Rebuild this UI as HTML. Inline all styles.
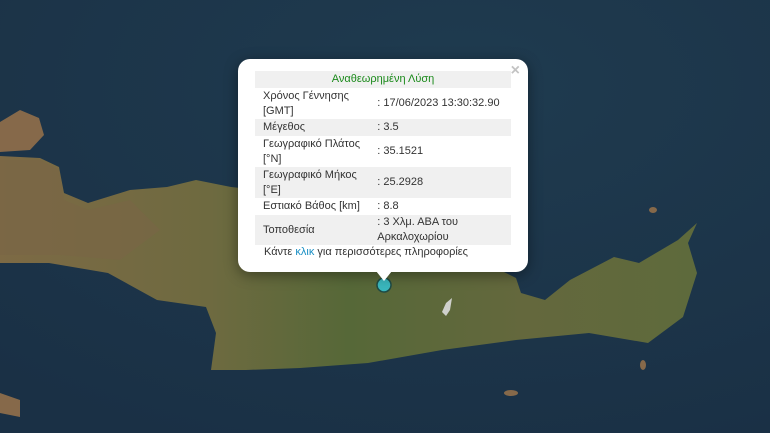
<!DOCTYPE html>
<html><head><meta charset="utf-8"><style>
body{margin:0;width:770px;height:433px;overflow:hidden;background:#1d3549;font-family:"Liberation Sans",sans-serif;}
#map{position:absolute;left:0;top:0}
.pop{position:absolute;left:238px;top:59px;width:290px;height:213px;background:#fff;border-radius:12px;box-shadow:0 3px 14px rgba(0,0,0,.4);}
.tip{position:absolute;left:376px;top:271px;width:0;height:0;border-left:8px solid transparent;border-right:8px solid transparent;border-top:10px solid #fff;}
.x{position:absolute;right:8px;top:3px;color:#c3c3c3;font-size:16px;font-weight:bold;}
table{position:absolute;left:17px;top:12px;width:256px;border-collapse:collapse;font-size:11px;color:#333;}
td{padding:0 0 0 8px;line-height:15px;vertical-align:middle}
tr.g{background:#f0f0f0}
.h td{text-align:center;color:#1b8a1b;height:17px;padding:0}
.f{position:absolute;left:26px;top:187px;font-size:11px;color:#333}
.f span{color:#1a8fc4}
</style></head><body>
<svg id="map" width="770" height="433">
<defs>
<linearGradient id="l" x1="0" y1="0" x2="1" y2="0"><stop offset="0" stop-color="#7d6a45"/><stop offset=".3" stop-color="#6e6a40"/><stop offset=".5" stop-color="#566838"/><stop offset=".75" stop-color="#64683d"/><stop offset="1" stop-color="#5e6a3c"/></linearGradient>
<radialGradient id="s" cx=".6" cy=".2" r=".9"><stop offset="0" stop-color="#1f3b4f"/><stop offset="1" stop-color="#1a3045"/></radialGradient>
</defs>
<rect width="770" height="433" fill="url(#s)"/>
<path d="M0,122 L20,110 L39,118 L44,135 L30,150 L0,152 Z" fill="#86694a"/>
<path d="M0,156 L40,158 L59,167 L64,193 L88,203 L130,190 L167,187 L196,180 L231,187 L260,190 L300,205 L420,230 L516,278 L521,293 L545,300 L570,280 L614,257 L639,263 L678,240 L697,223 L688,243 L697,273 L683,317 L648,343 L589,333 L516,340 L442,350 L368,363 L300,368 L246,370 L211,370 L216,333 L206,307 L157,300 L108,273 L49,263 L0,263 Z" fill="url(#l)"/>
<path d="M0,160 L40,160 L59,170 L64,200 L88,210 L130,200 L160,230 L120,260 L60,255 L0,255 Z" fill="#7a6646" opacity=".6"/>
<path d="M446,303 L452,298 L450,310 L446,316 L442,312 Z" fill="#cfd0cc"/>
<path d="M0,393 L20,400 L20,417 L0,413 Z" fill="#86694a"/>
<ellipse cx="653" cy="210" rx="4" ry="3" fill="#86694a"/>
<ellipse cx="643" cy="365" rx="3" ry="5" fill="#86694a"/>
<ellipse cx="511" cy="393" rx="7" ry="3" fill="#86694a"/>
<circle cx="384" cy="285" r="7" fill="#3ab7bd" stroke="#1f4a44" stroke-width="1.5"/>
</svg>
<div class="pop"><div class="x">×</div>
<table>
<tr class="g h"><td colspan="2">Αναθεωρημένη Λύση</td></tr>
<tr style="height:31px"><td>Χρόνος Γέννησης<br>[GMT]</td><td>: 17/06/2023 13:30:32.90</td></tr>
<tr class="g" style="height:17px"><td>Μέγεθος</td><td>: 3.5</td></tr>
<tr style="height:31px"><td>Γεωγραφικό Πλάτος<br>[°N]</td><td>: 35.1521</td></tr>
<tr class="g" style="height:31px"><td>Γεωγραφικό Μήκος<br>[°E]</td><td>: 25.2928</td></tr>
<tr style="height:17px"><td>Εστιακό Βάθος [km]</td><td>: 8.8</td></tr>
<tr class="g" style="height:30px"><td>Τοποθεσία</td><td>: 3 Χλμ. ΑΒΑ του<br>Αρκαλοχωρίου</td></tr>
</table>
<div class="f">Κάντε <span>κλικ</span> για περισσότερες πληροφορίες</div>
</div>
<div class="tip"></div>
</body></html>
